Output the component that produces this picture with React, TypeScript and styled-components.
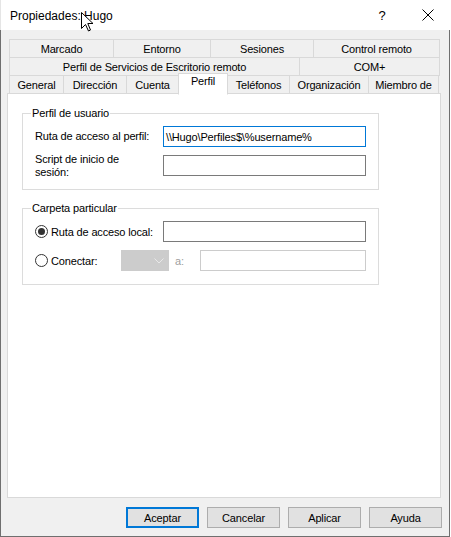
import React from "react";
import styled, { createGlobalStyle, css } from "styled-components";

const GlobalStyle = createGlobalStyle`
  html, body {
    margin: 0;
    padding: 0;
    background: #ffffff;
  }
  body {
    font-family: "Liberation Sans", Arial, sans-serif;
    font-size: 11px;
    letter-spacing: -0.15px;
    color: #000;
  }
  * {
    box-sizing: border-box;
  }
`;

const Window = styled.div`
  position: relative;
  width: 451px;
  height: 537px;
  display: flex;
  flex-direction: column;
  overflow: hidden;
`;

const TitleBar = styled.div`
  height: 30px;
  flex: none;
  display: flex;
  align-items: center;
  background: #ffffff;
  padding-left: 9px;
  border-left: 1px solid #e5e5e5;
`;

const Title = styled.div`
  flex: 1;
  font-size: 12px;
  letter-spacing: 0;
  color: #000;
  padding-top: 1px;
`;

const TitleButton = styled.div`
  width: 46px;
  height: 30px;
  display: flex;
  align-items: center;
  justify-content: center;
  font-size: 13px;
  color: #000;
`;

const Body = styled.div`
  width: 450px;
  flex: 1;
  display: flex;
  flex-direction: column;
  background: #f0f0f0;
  border: 1px solid #6f6f6f;
  border-top: none;
  padding: 9px 6px 8px 6px;
`;

const TabStrip = styled.div`
  margin-left: 2px;
  width: 430px;
  display: flex;
  flex-direction: column;
`;

const TabRow = styled.div`
  display: flex;
  height: 18px;
  align-items: flex-end;
`;

const Tab = styled.div<{ $w: number; $active?: boolean }>`
  width: ${({ $w }) => $w}px;
  flex: none;
  height: 19px;
  margin-right: -1px;
  margin-bottom: -1px;
  border: 1px solid #d9d9d9;
  background: #f0f0f0;
  display: flex;
  align-items: center;
  justify-content: center;
  white-space: nowrap;
  color: #000;

  ${({ $active }) =>
    $active &&
    css`
      position: relative;
      z-index: 2;
      height: 22px;
      margin-bottom: -2px;
      background: #ffffff;
      border-bottom-color: #ffffff;
      align-items: flex-start;
      padding-top: 1px;
    `}
`;

const Panel = styled.div`
  width: 434px;
  height: 405px;
  background: #ffffff;
  border: 1px solid #d9d9d9;
  padding: 12px 0 0 14px;
  display: flex;
  flex-direction: column;
  gap: 11px;
`;

const Group = styled.fieldset`
  width: 357px;
  margin: 0;
  border: 1px solid #dcdcdc;
  padding: 6px 0 13px 12px;
  min-width: 0;
`;

const Legend = styled.legend`
  padding: 0 1px;
  margin-left: -4px;
  line-height: 14px;
  color: #000;
`;

const FieldGrid = styled.div`
  display: grid;
  grid-template-columns: 128px 203px;
  grid-auto-rows: 21px;
  row-gap: 8px;
  align-items: center;
`;

const Label = styled.div`
  line-height: 13px;
  color: #000;
  white-space: nowrap;
`;

const TextBox = styled.div<{ $focused?: boolean; $disabled?: boolean; $w?: number }>`
  width: ${({ $w }) => ($w ? `${$w}px` : "203px")};
  height: 21px;
  border: 1px solid
    ${({ $focused, $disabled }) => ($focused ? "#0078d7" : $disabled ? "#cccccc" : "#7a7a7a")};
  background: #ffffff;
  display: flex;
  align-items: center;
  padding-left: 2px;
  white-space: nowrap;
  color: #000;
`;

const RadioLabel = styled.div`
  display: flex;
  align-items: center;
  gap: 3px;
  color: #000;
`;

const RadioCircle = styled.span<{ $checked?: boolean }>`
  width: 13px;
  height: 13px;
  flex: none;
  border-radius: 50%;
  border: 1px solid #333333;
  background: #ffffff;
  display: flex;
  align-items: center;
  justify-content: center;

  &::after {
    content: "";
    width: 7px;
    height: 7px;
    border-radius: 50%;
    background: ${({ $checked }) => ($checked ? "#333333" : "transparent")};
  }
`;

const ConnectRow = styled.div`
  display: flex;
  align-items: center;
  margin-top: 8px;
`;

const ConnectLabel = styled(RadioLabel)`
  width: 86px;
`;

const Combo = styled.div`
  width: 48px;
  height: 21px;
  background: #cccccc;
  border: 1px solid #cccccc;
  display: flex;
  align-items: center;
  justify-content: flex-end;
  padding-right: 4px;
`;

const DisabledText = styled.span`
  color: #a0a0a0;
  width: 31px;
  padding-left: 6px;
`;

const ButtonRow = styled.div`
  display: flex;
  justify-content: flex-end;
  gap: 8px;
  margin-top: 9px;
  padding-right: 1px;
`;

const Button = styled.div<{ $primary?: boolean }>`
  width: 73px;
  height: 21px;
  background: #e1e1e1;
  border: ${({ $primary }) => ($primary ? "2px solid #0078d7" : "1px solid #adadad")};
  display: flex;
  align-items: center;
  justify-content: center;
  color: #000;
`;

const Cursor = styled.svg`
  position: absolute;
  left: 81px;
  top: 12px;
`;

const topRow = [
  { label: "Marcado", w: 105 },
  { label: "Entorno", w: 98 },
  { label: "Sesiones", w: 104 },
  { label: "Control remoto", w: 127 },
];

const midRow = [
  { label: "Perfil de Servicios de Escritorio remoto", w: 291 },
  { label: "COM+", w: 141 },
];

const bottomRow = [
  { label: "General", w: 55 },
  { label: "Dirección", w: 64 },
  { label: "Cuenta", w: 53 },
  { label: "Perfil", w: 50, active: true },
  { label: "Teléfonos", w: 63 },
  { label: "Organización", w: 80 },
  { label: "Miembro de", w: 71 },
];

export default function App() {
  return (
    <>
      <GlobalStyle />
      <Window>
        <TitleBar>
          <Title>Propiedades: Hugo</Title>
          <TitleButton>?</TitleButton>
          <TitleButton>
            <svg width="12" height="12" viewBox="0 0 12 12">
              <path d="M0.5 0.5 L11.5 11.5 M11.5 0.5 L0.5 11.5" stroke="#000" strokeWidth="1" />
            </svg>
          </TitleButton>
        </TitleBar>
        <Body>
          <TabStrip>
            <TabRow>
              {topRow.map((t) => (
                <Tab key={t.label} $w={t.w}>{t.label}</Tab>
              ))}
            </TabRow>
            <TabRow>
              {midRow.map((t) => (
                <Tab key={t.label} $w={t.w}>{t.label}</Tab>
              ))}
            </TabRow>
            <TabRow>
              {bottomRow.map((t) => (
                <Tab key={t.label} $w={t.w} $active={t.active}>{t.label}</Tab>
              ))}
            </TabRow>
          </TabStrip>
          <Panel>
            <Group>
              <Legend>Perfil de usuario</Legend>
              <FieldGrid>
                <Label>Ruta de acceso al perfil:</Label>
                <TextBox $focused>\\Hugo\Perfiles$\%username%</TextBox>
                <Label>
                  Script de inicio de
                  <br />
                  sesión:
                </Label>
                <TextBox />
              </FieldGrid>
            </Group>
            <Group>
              <Legend>Carpeta particular</Legend>
              <FieldGrid>
                <RadioLabel>
                  <RadioCircle $checked />
                  Ruta de acceso local:
                </RadioLabel>
                <TextBox />
              </FieldGrid>
              <ConnectRow>
                <ConnectLabel>
                  <RadioCircle />
                  Conectar:
                </ConnectLabel>
                <Combo>
                  <svg width="10" height="6" viewBox="0 0 10 6">
                    <path d="M0.5 0.5 L5 5 L9.5 0.5" stroke="#e8e8e8" strokeWidth="1" fill="none" />
                  </svg>
                </Combo>
                <DisabledText>a:</DisabledText>
                <TextBox $disabled $w={166} />
              </ConnectRow>
            </Group>
          </Panel>
          <ButtonRow>
            <Button $primary>Aceptar</Button>
            <Button>Cancelar</Button>
            <Button>Aplicar</Button>
            <Button>Ayuda</Button>
          </ButtonRow>
        </Body>
        <Cursor width="13" height="20" viewBox="0 0 13 20">
          <path
            d="M0.5 0.5 L0.5 16.5 L4.5 12.5 L7.5 19 L9.5 18 L6.8 11.5 L12 11.5 Z"
            fill="#ffffff"
            stroke="#000000"
            strokeWidth="1"
          />
        </Cursor>
      </Window>
    </>
  );
}
